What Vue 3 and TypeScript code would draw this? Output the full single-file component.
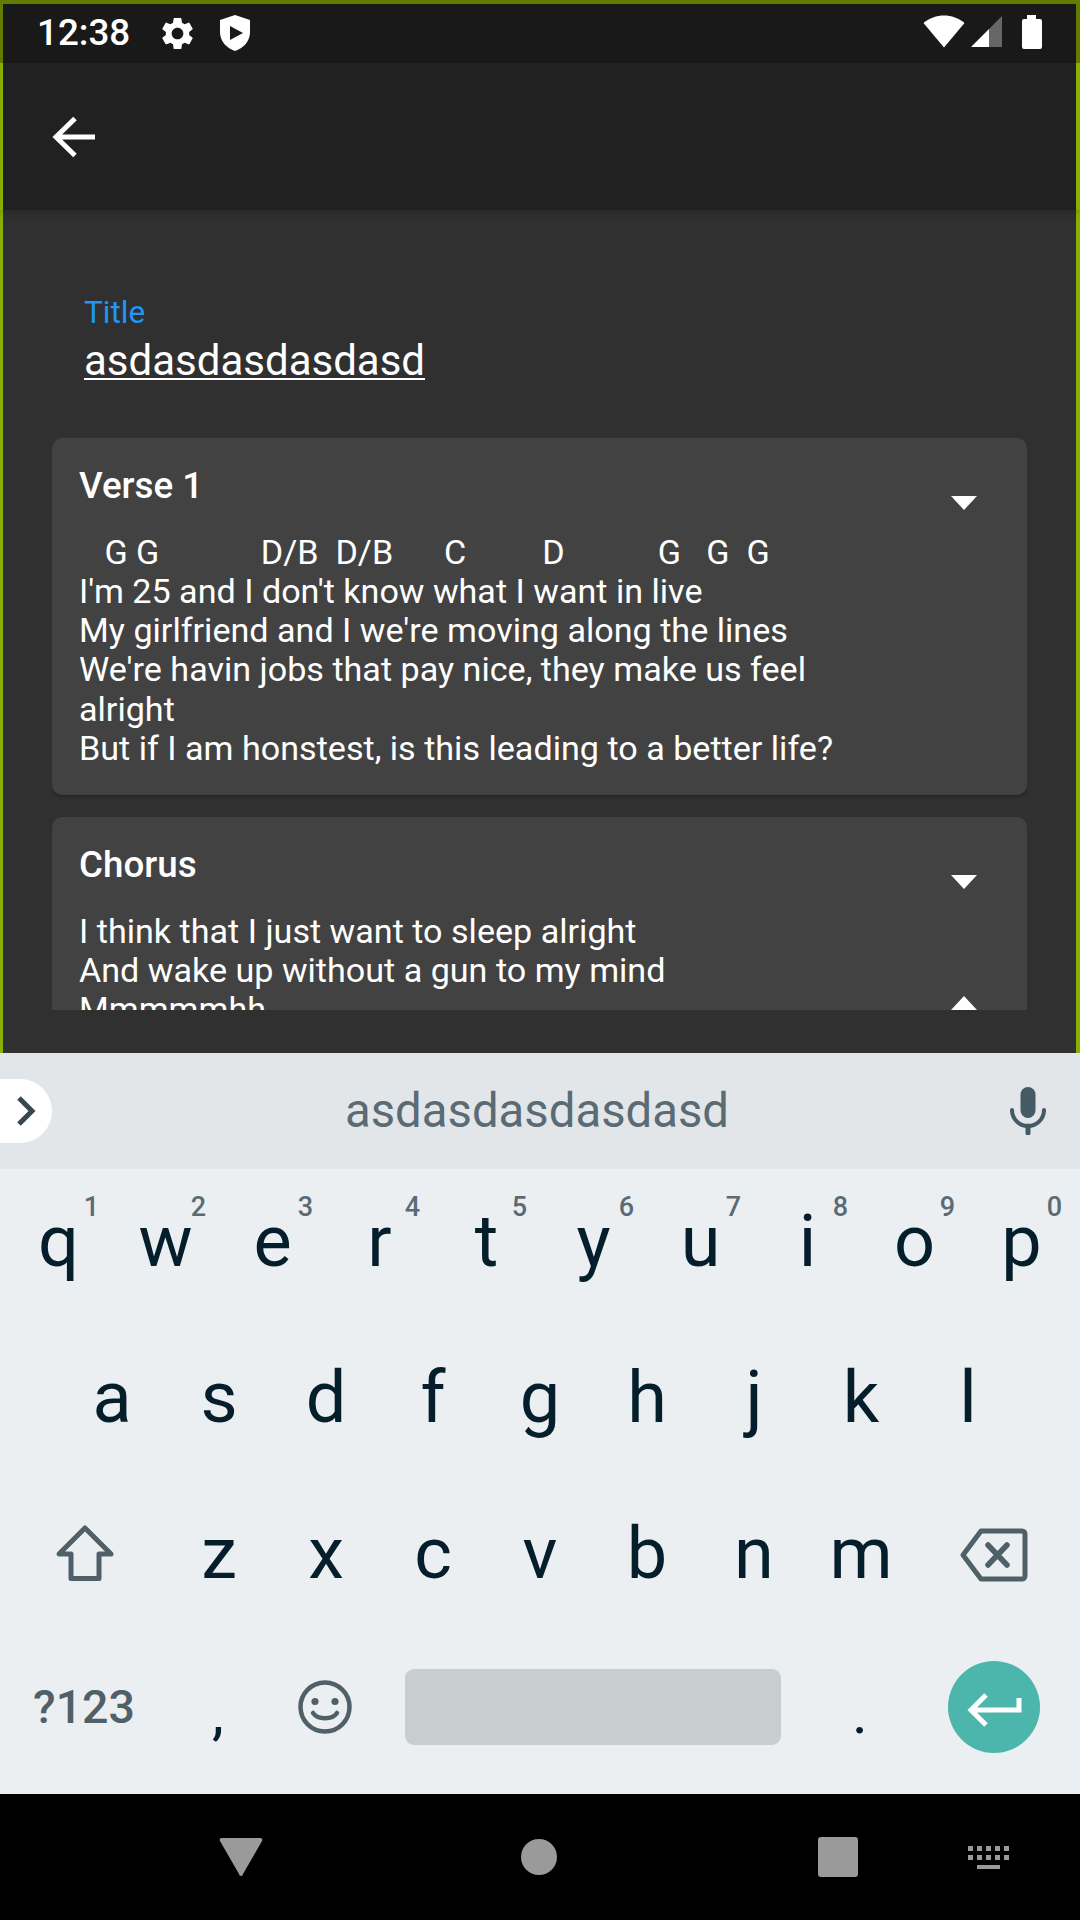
<script setup lang="ts">
const chords = '   G G            D/B  D/B      C         D           G   G  G'
const verse = [
  "I'm 25 and I don't know what I want in live",
  'My girlfriend and I we\'re moving along the lines',
  "We're havin jobs that pay nice, they make us feel alright",
  'But if I am honstest, is this leading to a better life?'
]
const chorus = [
  'I think that I just want to sleep alright',
  'And wake up without a gun to my mind',
  'Mmmmmhh'
]
const row1 = [
  ['q', '1'], ['w', '2'], ['e', '3'], ['r', '4'], ['t', '5'],
  ['y', '6'], ['u', '7'], ['i', '8'], ['o', '9'], ['p', '0']
]
const row2 = ['a', 's', 'd', 'f', 'g', 'h', 'j', 'k', 'l']
const row3 = ['z', 'x', 'c', 'v', 'b', 'n', 'm']
</script>

<template>
  <div class="phone">
    <header class="status">
      <span class="time">12:38</span>
      <svg class="gear" width="39" height="39" viewBox="0 0 24 24" fill="#fff">
        <path d="M19.14 12.94c.04-.3.06-.61.06-.94 0-.32-.02-.64-.07-.94l2.03-1.58c.18-.14.23-.41.12-.61l-1.92-3.32c-.12-.22-.37-.29-.59-.22l-2.39.96c-.5-.38-1.03-.7-1.62-.94l-.36-2.54c-.04-.24-.24-.41-.48-.41h-3.84c-.24 0-.43.17-.47.41l-.36 2.54c-.59.24-1.13.57-1.62.94l-2.39-.96c-.22-.08-.47 0-.59.22L2.74 8.87c-.12.21-.08.47.12.61l2.03 1.58c-.05.3-.09.63-.09.94s.02.64.07.94l-2.03 1.58c-.18.14-.23.41-.12.61l1.92 3.32c.12.22.37.29.59.22l2.39-.96c.5.38 1.03.7 1.62.94l.36 2.54c.05.24.24.41.48.41h3.84c.24 0 .44-.17.47-.41l.36-2.54c.59-.24 1.13-.56 1.62-.94l2.39.96c.22.08.47 0 .59-.22l1.92-3.32c.12-.22.07-.47-.12-.61l-2.01-1.58zM12 15.6c-1.98 0-3.6-1.62-3.6-3.6s1.62-3.6 3.6-3.6 3.6 1.62 3.6 3.6-1.62 3.6-3.6 3.6z" />
      </svg>
      <svg class="shield" width="30" height="36" viewBox="0 0 30 36">
        <path d="M15 0 L30 5 V17 C30 27 23 33 15 36 C7 33 0 27 0 17 V5 Z" fill="#fff" />
        <path d="M10 11 L23 18 L10 25 Z" fill="#191919" />
      </svg>
      <span class="status-space"></span>
      <svg class="sys" width="42" height="33" viewBox="0 0 42 33">
        <path d="M0.5 8 C12 -2 30 -2 41.5 8 L21 32.5 Z" fill="#fff" />
      </svg>
      <svg class="sys signal" width="32" height="32" viewBox="0 0 32 32">
        <path d="M0 31 L18 13 V31 Z" fill="#fff" />
        <path d="M18 13 L31 0 V31 H18 Z" fill="#666" />
      </svg>
      <svg class="sys battery" width="20" height="34" viewBox="0 0 20 34">
        <path d="M5 0 H14 V4 H18 a2 2 0 0 1 2 2 V32 a2 2 0 0 1 -2 2 H2 a2 2 0 0 1 -2 -2 V6 a2 2 0 0 1 2 -2 H5 Z" fill="#fff" />
      </svg>
    </header>

    <div class="appbar">
      <svg width="44" height="44" viewBox="0 0 44 44" fill="none" stroke="#fff" stroke-width="5">
        <path d="M43 22 H5 M23 3.5 L4 22 L23 40.5" />
      </svg>
    </div>

    <main class="body">
      <div class="field">
        <div class="field-label">Title</div>
        <div class="field-value">asdasdasdasdasd</div>
      </div>

      <div class="cards">
        <section class="card">
          <div class="card-text">
            <h3>Verse 1</h3>
            <div class="chords">{{ chords }}</div>
            <p>{{ verse.join('\n') }}</p>
          </div>
          <div class="card-arrows">
            <span class="arrow-down"></span>
          </div>
        </section>
        <section class="card">
          <div class="card-text">
            <h3>Chorus</h3>
            <p class="chorus">{{ chorus.join('\n') }}</p>
          </div>
          <div class="card-arrows">
            <span class="arrow-down"></span>
            <span class="arrow-up"></span>
          </div>
        </section>
      </div>
    </main>

    <div class="keyboard">
      <div class="strip">
        <div class="strip-tab">
          <svg width="20" height="32" viewBox="0 0 20 32" fill="none" stroke="#37474f" stroke-width="5">
            <path d="M3 3 L16 16 L3 29" />
          </svg>
        </div>
        <div class="strip-text">asdasdasdasdasd</div>
        <div class="strip-mic">
          <svg width="36" height="48" viewBox="0 0 36 48" fill="none" stroke="#455a64">
            <rect x="10.5" y="0" width="15" height="31" rx="7.5" fill="#455a64" stroke="none" />
            <path d="M2 23 a16 16 0 0 0 32 0" stroke-width="4" stroke-linecap="round" />
            <path d="M18 39 V46" stroke-width="5" stroke-linecap="round" />
          </svg>
        </div>
      </div>

      <div class="row">
        <div v-for="k in row1" :key="k[0]" class="key">
          {{ k[0] }}<span class="hint">{{ k[1] }}</span>
        </div>
      </div>
      <div class="row">
        <div v-for="k in row2" :key="k" class="key">{{ k }}</div>
      </div>
      <div class="row">
        <div class="key wide">
          <svg width="60" height="58" viewBox="0 0 60 58" fill="none" stroke="#4f6068" stroke-width="5" stroke-linejoin="round">
            <path d="M30 4 L4 30 H16 V54.5 H44 V30 H56 Z" />
          </svg>
        </div>
        <div v-for="k in row3" :key="k" class="key">{{ k }}</div>
        <div class="key wide">
          <svg class="del" width="68" height="54" viewBox="0 0 68 54" fill="none" stroke="#4f6068" stroke-width="5" stroke-linejoin="round" stroke-linecap="round">
            <path d="M21 3 H62 a3 3 0 0 1 3 3 V48 a3 3 0 0 1 -3 3 H21 L3 27 Z" />
            <path d="M28 17 L47 37 M47 17 L28 37" stroke-width="5.5" />
          </svg>
        </div>
      </div>
      <div class="row last">
        <div class="key wide symbols">?123</div>
        <div class="key punct">,</div>
        <div class="key">
          <svg width="54" height="54" viewBox="0 0 54 54" fill="none" stroke="#4f6068" stroke-width="4.5">
            <circle cx="27" cy="27" r="24.5" />
            <circle cx="17" cy="21.5" r="3.6" fill="#4f6068" stroke="none" />
            <circle cx="37" cy="21.5" r="3.6" fill="#4f6068" stroke="none" />
            <path d="M15 33 C20 40 34 40 39 33" stroke-linecap="round" />
          </svg>
        </div>
        <div class="key space-slot"><div class="spacebar"></div></div>
        <div class="key punct">.</div>
        <div class="key wide">
          <div class="enter">
            <svg width="92" height="92" viewBox="0 0 92 92" fill="none" stroke="#fff" stroke-width="5">
              <path d="M71 37 V49 H25 M38 34 L23 49 L38 64" />
            </svg>
          </div>
        </div>
      </div>
    </div>

    <nav class="nav">
      <svg class="nav-back" width="44" height="38" viewBox="0 0 44 38">
        <path d="M3 0 H41 a2 2 0 0 1 2 3 L24 36 a2 2 0 0 1 -4 0 L1 3 a2 2 0 0 1 2 -3 Z" fill="#9a9a9a" />
      </svg>
      <span class="nav-home"></span>
      <span class="nav-recent"></span>
      <svg class="nav-kbd" width="42" height="24" viewBox="0 0 42 24" fill="#9a9a9a">
        <rect v-for="i in 5" :key="'a' + i" :x="(i - 1) * 9" y="0" width="5" height="5" />
        <rect v-for="i in 5" :key="'b' + i" :x="(i - 1) * 9" y="9" width="5" height="5" />
        <rect x="9" y="19" width="23" height="4" />
      </svg>
    </nav>
  </div>
</template>

<style>
html,
body {
  margin: 0;
  background: #000;
}
</style>

<style scoped>
.phone {
  width: 1080px;
  height: 1920px;
  display: flex;
  flex-direction: column;
  overflow: hidden;
  font-family: Roboto, "Liberation Sans", sans-serif;
  color: #fff;
}

.status {
  height: 63px;
  box-sizing: border-box;
  background: #191919;
  border: solid #617c00;
  border-width: 4px 4px 0 3px;
  display: flex;
  align-items: center;
  padding: 0 34px 0 34px;
}
.time {
  font-size: 36.75px;
  font-weight: 500;
  line-height: 1;
}
.gear {
  margin-left: 28px;
}
.shield {
  margin-left: 23px;
  margin-top: -2px;
}
.status-space {
  flex: 1;
}
.sys {
  margin-top: -4px;
}
.signal {
  margin-left: 6px;
}
.battery {
  margin-left: 19px;
}

.appbar {
  height: 147px;
  box-sizing: border-box;
  background: #212121;
  border: solid #89b000;
  border-width: 0 4px 0 3px;
  padding-left: 49px;
  display: flex;
  align-items: center;
  position: relative;
  z-index: 1;
  box-shadow: 0 3px 6px rgba(0, 0, 0, 0.18);
}

.body {
  height: 843px;
  box-sizing: border-box;
  background: #303030;
  border: solid #89b000;
  border-width: 0 4px 0 3px;
  padding: 84px 49px 0;
}
.field {
  padding-left: 32px;
}
.field-label {
  font-size: 31.5px;
  line-height: 37px;
  color: #2196f3;
}
.field-value {
  display: inline-block;
  font-size: 42px;
  line-height: 35px;
  margin-top: 12px;
  border-bottom: 2px solid #fff;
}
.cards {
  height: 572px;
  margin-top: 58px;
  overflow: hidden;
  display: flex;
  flex-direction: column;
  gap: 22px;
}
.card {
  flex: none;
  display: flex;
  background: #424242;
  border-radius: 10px;
  box-shadow: 0 2px 3px rgba(0, 0, 0, 0.25);
  padding: 28px 0 0 27px;
}
.card-text {
  width: 818px;
}
h3 {
  margin: 0;
  font-size: 36.75px;
  font-weight: 500;
  line-height: 40px;
}
.chords {
  margin-top: 27px;
  white-space: pre;
  font-size: 34.125px;
  line-height: 39px;
}
p {
  margin: 0 0 27px;
  white-space: pre-line;
  font-size: 34.125px;
  line-height: 39.2px;
}
.chorus {
  margin-top: 27px;
  height: 240px;
}
.card-arrows {
  flex: 1;
  display: flex;
  flex-direction: column;
  align-items: center;
  padding: 30px 0 0 4px;
  gap: 107px;
}
.arrow-down {
  width: 0;
  height: 0;
  border-left: 13.5px solid transparent;
  border-right: 13.5px solid transparent;
  border-top: 14px solid #fff;
}
.arrow-up {
  width: 0;
  height: 0;
  border-left: 13.5px solid transparent;
  border-right: 13.5px solid transparent;
  border-bottom: 14px solid #fff;
}

.keyboard {
  height: 741px;
  background: #eceff2;
  color: #041e2b;
}
.strip {
  height: 116px;
  background: #e2e6e9;
  display: grid;
  grid-template-columns: 52px 1fr 106px;
  align-items: center;
}
.strip-tab {
  height: 64px;
  background: #fff;
  border-radius: 0 32px 32px 0;
  display: flex;
  align-items: center;
  justify-content: center;
  box-sizing: border-box;
}
.strip-text {
  font-size: 47.3px;
  color: #5a6b75;
  text-align: center;
  padding-left: 48px;
}
.strip-mic {
  display: flex;
  justify-content: center;
  padding-left: 2px;
}
.row {
  height: 156px;
  display: flex;
  justify-content: center;
}
.row.last {
  padding-right: 2px;
}
.key {
  width: 107px;
  position: relative;
  box-sizing: border-box;
  padding-bottom: 12px;
  display: flex;
  align-items: center;
  justify-content: center;
  font-size: 72px;
}
.row.last .key {
  padding-bottom: 16px;
}
.key.wide {
  width: 161px;
}
.del {
  margin-top: 4px;
  margin-left: -2px;
}
.hint {
  position: absolute;
  top: 22px;
  right: 13px;
  font-size: 27px;
  font-weight: 500;
  line-height: 32px;
  color: #5a6b75;
}
.row.last .symbols {
  font-size: 46.5px;
  font-weight: 500;
  color: #4f6068;
}
.row.last .punct {
  font-size: 60px;
  padding: 10px 0 16px;
}
.space-slot {
  width: 428px;
}
.spacebar {
  width: 376px;
  height: 76px;
  background: #c8cdd0;
  border-radius: 9px;
}
.enter {
  width: 92px;
  height: 92px;
  border-radius: 50%;
  background: #4db6ac;
}

.nav {
  height: 126px;
  background: #000;
  display: flex;
  align-items: center;
  padding-left: 219px;
}
.nav-home {
  width: 36px;
  height: 36px;
  border-radius: 50%;
  background: #9a9a9a;
  margin-left: 258px;
}
.nav-recent {
  width: 40px;
  height: 40px;
  border-radius: 3px;
  background: #9a9a9a;
  margin-left: 261px;
}
.nav-kbd {
  margin-left: 110px;
  margin-top: 2px;
}
</style>
